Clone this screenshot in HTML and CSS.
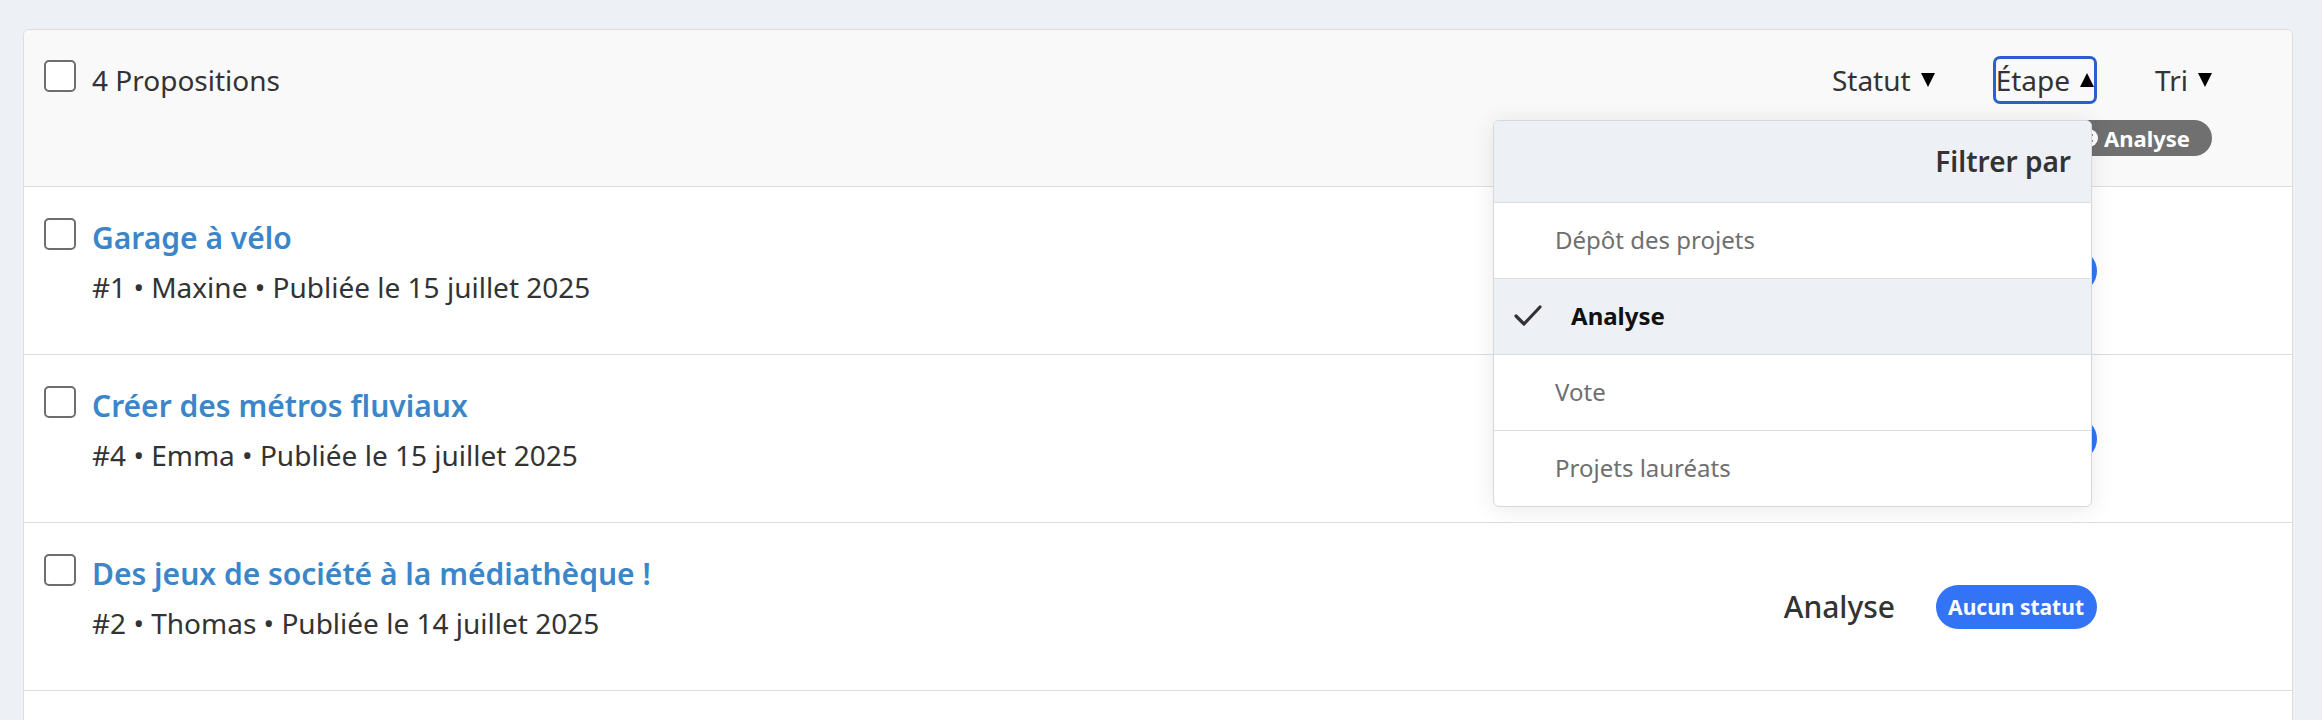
FILE: index.html
```html
<!DOCTYPE html>
<html lang="fr">
<head>
    <meta charset="UTF-8">
    <title>Propositions</title>
    <link rel="stylesheet" href="styles.css">
</head>
<body>
<div class="card">
    <div class="list-head">
        <label class="select-all">
            <span class="box"></span>
            <span class="count">4 Propositions</span>
        </label>
        <div class="tools">
            <div class="filters">
                <button class="filter">Statut <span class="caret"></span></button>
                <div class="filter-wrap">
                    <button class="filter focused">Étape <span class="caret up"></span></button>
                    <div class="menu">
                        <div class="menu-head">Filtrer par</div>
                        <div class="menu-item">Dépôt des projets</div>
                        <div class="menu-item checked">
                            <svg class="check" width="28" height="22" viewBox="0 0 28 22">
                                <polyline points="2,11 10,19 26,2" fill="none" stroke="#333" stroke-width="3.2" stroke-linecap="round" stroke-linejoin="round"/>
                            </svg>
                            Analyse
                        </div>
                        <div class="menu-item">Vote</div>
                        <div class="menu-item">Projets lauréats</div>
                    </div>
                </div>
                <button class="filter">Tri <span class="caret"></span></button>
            </div>
            <div class="chips">
                <span class="chip">
                    <svg class="chip-x" width="18" height="18" viewBox="0 0 18 18">
                        <circle cx="9" cy="9" r="9" fill="#fff"/>
                        <path d="M6 6l6 6M12 6l-6 6" stroke="#707070" stroke-width="2" stroke-linecap="round"/>
                    </svg>
                    Analyse
                </span>
            </div>
        </div>
    </div>

    <ul class="rows">
        <li class="row">
            <span class="box"></span>
            <div class="info">
                <a class="title" href="#">Garage à vélo</a>
                <p class="meta">#1 • Maxine • Publiée le 15 juillet 2025</p>
            </div>
            <div class="state">
                <span class="step">Analyse</span>
                <span class="badge">Aucun statut</span>
            </div>
        </li>
        <li class="row">
            <span class="box"></span>
            <div class="info">
                <a class="title" href="#">Créer des métros fluviaux</a>
                <p class="meta">#4 • Emma • Publiée le 15 juillet 2025</p>
            </div>
            <div class="state">
                <span class="step">Analyse</span>
                <span class="badge">Aucun statut</span>
            </div>
        </li>
        <li class="row">
            <span class="box"></span>
            <div class="info">
                <a class="title" href="#">Des jeux de société à la médiathèque !</a>
                <p class="meta">#2 • Thomas • Publiée le 14 juillet 2025</p>
            </div>
            <div class="state">
                <span class="step">Analyse</span>
                <span class="badge">Aucun statut</span>
            </div>
        </li>
    </ul>
</div>
</body>
</html>
```

FILE: styles.css
```css
body {
    margin: 0;
    padding: 29px 29px 0 23px;
    background-color: #edf0f5;
    color: #333333;
    font-family: "Noto Sans", "Open Sans", sans-serif;
}

.card {
    background-color: #ffffff;
    border: 1px solid #dddddd;
    border-radius: 6px;
}

/* checkbox look */
.box {
    display: block;
    flex: none;
    width: 28px;
    height: 28px;
    border: 2px solid #6e6e6e;
    border-radius: 5px;
    background-color: #ffffff;
}

.list-head {
    display: flex;
    justify-content: space-between;
    align-items: flex-start;
    padding: 29px 80px 30px 20px;
    background-color: #f9f9f9;
    border-bottom: 1px solid #dddddd;
    border-radius: 6px 6px 0 0;
}
.select-all {
    display: flex;
    align-items: flex-start;
    gap: 16px;
}
.select-all .box {
    margin-top: 1px;
}
.count {
    font-size: 28px;
    line-height: 42px;
}

.tools {
    display: flex;
    flex-direction: column;
    align-items: flex-end;
}
.filters {
    display: flex;
    gap: 61px;
}
.filter {
    display: inline-flex;
    align-items: center;
    gap: 10px;
    padding: 0;
    border: none;
    background: none;
    font-family: inherit;
    font-size: 28px;
    line-height: 42px;
    color: #333333;
}
.filter.focused {
    outline: 3px solid #2b5fcb;
    outline-offset: 0;
    border-radius: 4px;
}
.caret {
    width: 0;
    height: 0;
    border-left: 7.5px solid transparent;
    border-right: 7.5px solid transparent;
    border-top: 14px solid #000000;
}
.caret.up {
    border-top: none;
    border-bottom: 14px solid #000000;
}

.filter-wrap {
    position: relative;
}
.menu {
    position: absolute;
    top: calc(100% + 19px);
    right: 2px;
    z-index: 10;
    width: 597px;
    background-color: #ffffff;
    border: 1px solid #d8d8d8;
    border-radius: 6px;
    box-shadow: 0 2px 24px rgba(0, 0, 0, 0.09);
    overflow: hidden;
}
.menu-head {
    padding: 19px 20px 20px;
    text-align: right;
    font-size: 28px;
    line-height: 42px;
    font-weight: 600;
    background-color: #edf0f5;
    border-bottom: 1px solid #dddddd;
}
.menu-item {
    display: flex;
    align-items: center;
    padding: 19px 0 20px 61px;
    font-size: 24px;
    line-height: 36px;
    color: #6f6f6f;
    border-bottom: 1px solid #dddddd;
}
.menu-item:last-child {
    border-bottom: none;
}
.menu-item.checked {
    padding-left: 20px;
    background-color: #edf0f5;
    color: #111111;
    font-weight: 700;
}
.check {
    margin-right: 29px;
}

.chips {
    margin-top: 19px;
}
.chip {
    display: inline-flex;
    align-items: center;
    gap: 6px;
    height: 36px;
    padding: 0 22px 0 14px;
    border-radius: 18px;
    background-color: #707070;
    color: #ffffff;
    font-size: 22px;
    font-weight: 700;
}

.rows {
    list-style: none;
    margin: 0;
    padding: 0;
    min-height: 560px;
}
.row {
    display: flex;
    align-items: center;
    min-height: 167px;
    padding: 0 195px 0 20px;
    border-bottom: 1px solid #dedede;
}
.row .box {
    align-self: flex-start;
    margin-top: 31px;
}
.info {
    align-self: flex-start;
    padding-top: 28px;
    margin-left: 16px;
}
.title {
    display: block;
    font-size: 30px;
    line-height: 45px;
    font-weight: 600;
    color: #3a86c9;
    text-decoration: none;
}
.meta {
    margin: 6px 0 0;
    font-size: 28px;
    line-height: 42px;
}
.state {
    display: flex;
    align-items: center;
    gap: 41px;
    margin-left: auto;
}
.step {
    font-size: 30px;
    font-weight: 500;
}
.badge {
    display: inline-block;
    height: 44px;
    padding: 0 13px 0 12px;
    border-radius: 22px;
    background-color: #3373f5;
    color: #ffffff;
    font-size: 21px;
    line-height: 44px;
    font-weight: 700;
}
```
